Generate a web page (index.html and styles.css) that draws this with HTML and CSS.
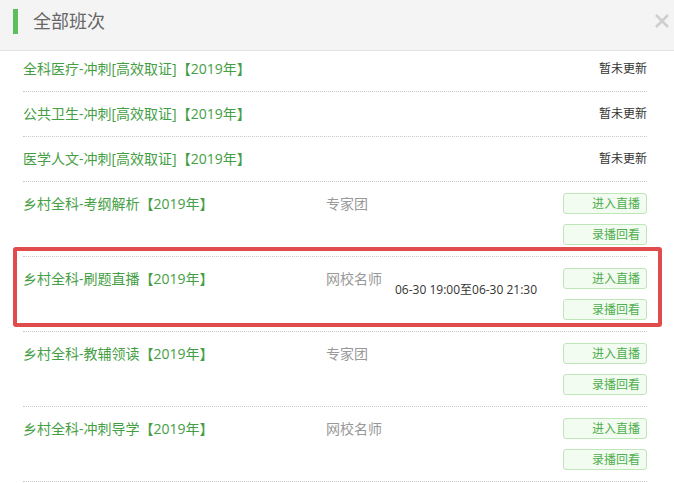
FILE: index.html
```html
<!doctype html>
<html lang="zh-CN">

<head>
    <meta charset="utf-8">
    <meta name="viewport" content="width=device-width, initial-scale=1">
    <title>全部班次</title>
    <link rel="stylesheet" href="styles.css">
</head>

<body>
<div class="dialog">
    <header class="dialog-head">
        <h2 class="dialog-title">全部班次</h2>
        <button type="button" class="close" aria-label="关闭">
            <svg width="16" height="16" viewBox="0 0 16 16" aria-hidden="true">
                <path d="M2 2 L14 14 M14 2 L2 14" stroke="currentColor" stroke-width="2.6" fill="none"/>
            </svg>
        </button>
    </header>

    <ul class="class-list">
        <li class="class-row">
            <span class="class-name">全科医疗-冲刺[高效取证]【2019年】</span>
            <span class="class-status">暂未更新</span>
        </li>
        <li class="class-row">
            <span class="class-name">公共卫生-冲刺[高效取证]【2019年】</span>
            <span class="class-status">暂未更新</span>
        </li>
        <li class="class-row">
            <span class="class-name">医学人文-冲刺[高效取证]【2019年】</span>
            <span class="class-status">暂未更新</span>
        </li>
        <li class="class-row">
            <span class="class-name">乡村全科-考纲解析【2019年】</span>
            <span class="class-teacher">专家团</span>
            <span class="class-time"></span>
            <div class="class-actions">
                <a class="btn" href="#">进入直播</a>
                <a class="btn" href="#">录播回看</a>
            </div>
        </li>
        <li class="class-row highlighted">
            <span class="class-name">乡村全科-刷题直播【2019年】</span>
            <span class="class-teacher">网校名师</span>
            <span class="class-time">06-30 19:00至06-30 21:30</span>
            <div class="class-actions">
                <a class="btn" href="#">进入直播</a>
                <a class="btn" href="#">录播回看</a>
            </div>
        </li>
        <li class="class-row">
            <span class="class-name">乡村全科-教辅领读【2019年】</span>
            <span class="class-teacher">专家团</span>
            <span class="class-time"></span>
            <div class="class-actions">
                <a class="btn" href="#">进入直播</a>
                <a class="btn" href="#">录播回看</a>
            </div>
        </li>
        <li class="class-row">
            <span class="class-name">乡村全科-冲刺导学【2019年】</span>
            <span class="class-teacher">网校名师</span>
            <span class="class-time"></span>
            <div class="class-actions">
                <a class="btn" href="#">进入直播</a>
                <a class="btn" href="#">录播回看</a>
            </div>
        </li>
    </ul>
</div>
</body>
</html>
```

FILE: styles.css
```css
:root {
    /* Colors */
    --color-head-bg: #f4f4f4;
    --color-head-border: #e2e2e2;
    --color-accent: #5cbf5c;
    --color-title: #666;
    --color-link: #449e44;
    --color-muted: #999;
    --color-text: #333;
    --color-sep: #c8c8c8;
    --color-btn-bg: #f3fcf1;
    --color-btn-border: #bfe6b9;
    --color-btn-text: #4fae4f;
    --color-mark: #e04b4b;

    /* Typography */
    --font-stack: "Open Sans", "Noto Sans CJK SC", sans-serif;
}

*, *::before, *::after {
    box-sizing: border-box;
}

body {
    margin: 0;
    font-family: var(--font-stack);
    background: #fff;
    color: var(--color-text);
}

.dialog {
    width: 674px;
}

.dialog-head {
    display: flex;
    align-items: center;
    height: 51px;
    padding: 0 4px 8px 13px;
    background: var(--color-head-bg);
    border-bottom: 1px solid var(--color-head-border);
}

.dialog-title {
    margin: 0;
    padding-left: 15px;
    border-left: 5px solid var(--color-accent);
    font-size: 18px;
    font-weight: normal;
    line-height: 25px;
    color: var(--color-title);
}

.close {
    margin-left: auto;
    padding: 0;
    width: 16px;
    height: 16px;
    border: none;
    background: none;
    color: #cfcfcf;
    cursor: pointer;
}

.close svg {
    display: block;
}

.class-list {
    list-style: none;
    margin: 0;
    padding: 0 27px 0 23px;
}

.class-row {
    position: relative;
    display: flex;
    align-items: flex-start;
    padding: 11px 0 12px;
    border-bottom: 1px dotted var(--color-sep);
    font-size: 14px;
    line-height: 21px;
}

.class-row:first-child {
    padding-top: 7px;
}

.class-name {
    flex: 0 0 303px;
    color: var(--color-link);
}

.class-teacher {
    color: var(--color-muted);
}

.class-time {
    margin: 11px 0 0 13px;
    font-size: 12px;
    color: var(--color-text);
}

.class-status {
    margin-left: auto;
    font-size: 12px;
    color: var(--color-text);
}

.class-actions {
    display: flex;
    flex-direction: column;
    gap: 10px;
    margin-left: auto;
    margin-bottom: -1px;
}

.btn {
    display: block;
    width: 84px;
    height: 21px;
    padding-right: 6px;
    text-align: right;
    font-size: 12px;
    line-height: 19px;
    color: var(--color-btn-text);
    text-decoration: none;
    background: var(--color-btn-bg);
    border: 1px solid var(--color-btn-border);
    border-radius: 3px;
}

.highlighted::after {
    content: "";
    position: absolute;
    top: -10px;
    left: -10px;
    right: -15px;
    bottom: 4px;
    border: 4px solid var(--color-mark);
    border-radius: 3px;
    pointer-events: none;
}
```
